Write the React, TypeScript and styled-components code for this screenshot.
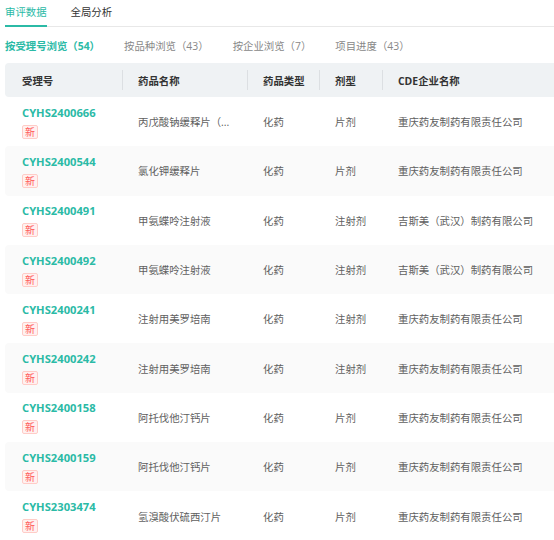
import styled, { createGlobalStyle } from "styled-components";

const GlobalStyle = createGlobalStyle`
  html, body {
    margin: 0;
    padding: 0;
    background: #fff;
    overflow: hidden;
  }
  body {
    font-family: "Open Sans", "Noto Sans CJK SC", sans-serif;
    font-size: 10.4px;
    color: #555;
  }
`;

const Page = styled.div`
  width: 554px;
  height: 540px;
  padding-left: 5px;
  box-sizing: border-box;
  overflow: hidden;
`;

const TabBar = styled.div`
  display: flex;
  gap: 24px;
  height: 26px;
  border-bottom: 1px solid #e8e8e8;
`;

const Tab = styled.div<{ $active?: boolean }>`
  position: relative;
  line-height: 24px;
  color: ${(p) => (p.$active ? "#2bbaa6" : "#333")};
  &::after {
    content: "";
    position: absolute;
    left: 0;
    right: 0;
    bottom: -1px;
    height: 2px;
    background: ${(p) => (p.$active ? "#2bbaa6" : "transparent")};
  }
`;

const SubTabs = styled.div`
  display: flex;
  gap: 24px;
  height: 36px;
  align-items: center;
`;

const SubTab = styled.div<{ $active?: boolean }>`
  color: ${(p) => (p.$active ? "#2bbaa6" : "#888")};
  font-weight: ${(p) => (p.$active ? 700 : 400)};
`;

const Table = styled.div`
  width: 560px;
`;

const cols = "117px 125px 72px 63px 1fr";

const HeadRow = styled.div`
  display: grid;
  grid-template-columns: ${cols};
  height: 34px;
  align-items: center;
  background: #eff2f4;
  border-radius: 4px 0 0 4px;
`;

const HeadCell = styled.div<{ $first?: boolean }>`
  position: relative;
  padding-left: ${(p) => (p.$first ? 17 : 16)}px;
  font-weight: 700;
  color: #333;
  &::before {
    content: "";
    display: ${(p) => (p.$first ? "none" : "block")};
    position: absolute;
    left: 0;
    top: -3px;
    width: 1px;
    height: 20px;
    background: #dcdfe2;
  }
`;

const Row = styled.div<{ $alt?: boolean }>`
  display: grid;
  grid-template-columns: ${cols};
  height: 49.3px;
  align-items: center;
  background: ${(p) => (p.$alt ? "#fafafa" : "#fff")};
  border-radius: 4px 0 0 4px;
`;

const Cell = styled.div<{ $first?: boolean }>`
  padding-left: ${(p) => (p.$first ? 17 : 16)}px;
  white-space: nowrap;
  overflow: hidden;
  text-overflow: ellipsis;
  padding-right: 8px;
  color: #606060;
`;

const IdLink = styled.div`
  font-weight: 700;
  color: #2bbaa6;
  font-size: 11.2px;
  line-height: 15px;
`;

const NewBadge = styled.span`
  display: inline-block;
  margin-top: 5px;
  padding: 0 2px;
  font-size: 10px;
  line-height: 12px;
  color: #ff5a5a;
  background: #fff1f0;
  border: 1px solid #ffccc7;
  border-radius: 2px;
`;

const rows = [
  ["CYHS2400666", "丙戊酸钠缓释片（...", "化药", "片剂", "重庆药友制药有限责任公司"],
  ["CYHS2400544", "氯化钾缓释片", "化药", "片剂", "重庆药友制药有限责任公司"],
  ["CYHS2400491", "甲氨蝶呤注射液", "化药", "注射剂", "吉斯美（武汉）制药有限公司"],
  ["CYHS2400492", "甲氨蝶呤注射液", "化药", "注射剂", "吉斯美（武汉）制药有限公司"],
  ["CYHS2400241", "注射用美罗培南", "化药", "注射剂", "重庆药友制药有限责任公司"],
  ["CYHS2400242", "注射用美罗培南", "化药", "注射剂", "重庆药友制药有限责任公司"],
  ["CYHS2400158", "阿托伐他汀钙片", "化药", "片剂", "重庆药友制药有限责任公司"],
  ["CYHS2400159", "阿托伐他汀钙片", "化药", "片剂", "重庆药友制药有限责任公司"],
  ["CYHS2303474", "氢溴酸伏硫西汀片", "化药", "片剂", "重庆药友制药有限责任公司"],
];

const App = () => {
  return (
    <>
      <GlobalStyle />
      <Page>
        <TabBar>
          <Tab $active>审评数据</Tab>
          <Tab>全局分析</Tab>
        </TabBar>
        <SubTabs>
          <SubTab $active>按受理号浏览（54）</SubTab>
          <SubTab>按品种浏览（43）</SubTab>
          <SubTab>按企业浏览（7）</SubTab>
          <SubTab>项目进度（43）</SubTab>
        </SubTabs>
        <Table>
          <HeadRow>
            <HeadCell $first>受理号</HeadCell>
            <HeadCell>药品名称</HeadCell>
            <HeadCell>药品类型</HeadCell>
            <HeadCell>剂型</HeadCell>
            <HeadCell>CDE企业名称</HeadCell>
          </HeadRow>
          {rows.map((r, i) => (
            <Row key={r[0]} $alt={i % 2 === 1}>
              <Cell $first>
                <IdLink>{r[0]}</IdLink>
                <NewBadge>新</NewBadge>
              </Cell>
              <Cell>{r[1]}</Cell>
              <Cell>{r[2]}</Cell>
              <Cell>{r[3]}</Cell>
              <Cell>{r[4]}</Cell>
            </Row>
          ))}
        </Table>
      </Page>
    </>
  );
};

export default App;
